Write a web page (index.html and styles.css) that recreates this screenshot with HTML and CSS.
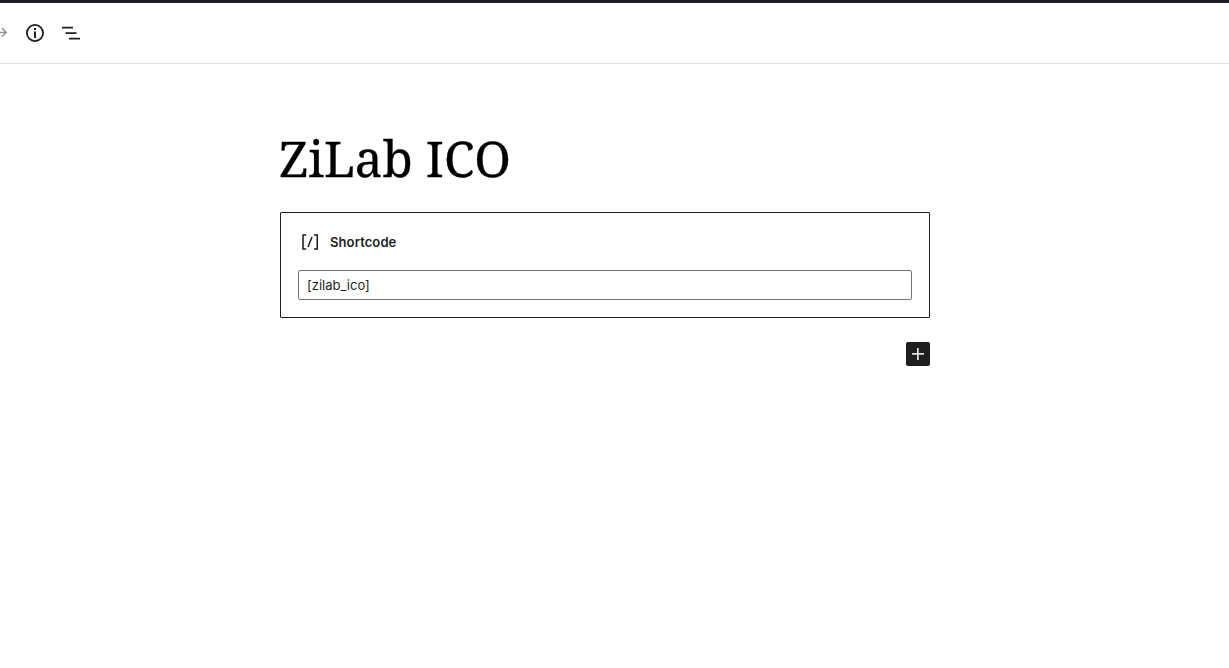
FILE: index.html
```
<!DOCTYPE html>
<html lang="en">
<head>
  <meta charset="UTF-8">
  <title>ZiLab ICO</title>
  <link rel="stylesheet" href="styles.css">
</head>
<body>
  <div class="toolbar">
    <button class="tool tool-redo" aria-label="Redo">
      <svg width="24" height="24" viewBox="0 0 24 24"><path d="M15.6 6.5l-1.1 1 2.9 3.3H8c-.9 0-1.7.3-2.3.9-1.4 1.5-1.4 4.2-1.4 5.6v.2h1.5v-.3c0-1.1 0-3.5 1-4.5.3-.3.7-.5 1.3-.5h9.2L14.5 15l1.1 1.1 4.6-4.6-4.6-5z"/></svg>
    </button>
    <button class="tool" aria-label="Details">
      <svg width="24" height="24" viewBox="0 0 24 24"><path fill-rule="evenodd" d="M12 3a9 9 0 1 0 0 18 9 9 0 0 0 0-18zm0 16.200a7.200 7.200 0 1 1 0-14.400 7.200 7.200 0 0 1 0 14.400z"/><path d="M11 7h2v2h-2zM11 10.500h2V17h-2z"/></svg>
    </button>
    <button class="tool" aria-label="List view">
      <svg width="24" height="24" viewBox="0 0 24 24"><path d="M3 5.800h11v1.700H3zM6.500 11.300h11V13h-11zM21 16.800H10v1.700h11z"/></svg>
    </button>
  </div>

  <div class="editor">
    <h1 class="post-title">ZiLab ICO</h1>

    <div class="shortcode-block">
      <div class="shortcode-label">
        <svg width="24" height="24" viewBox="0 0 24 24"><path d="M16 4.200v1.500h2.500v12.500H16v1.500h4V4.200h-4zM4.200 19.800h4v-1.500H5.800V5.800h2.500V4.200h-4l-.1 15.600zm5.100-3.100l1.400.6 4-10-1.400-.6-4 10z"/></svg>
        <span>Shortcode</span>
      </div>
      <input class="shortcode-input" type="text" value="[zilab_ico]">
    </div>

    <div class="inserter">
      <button class="add-block" aria-label="Add block">
        <svg width="24" height="24" viewBox="0 0 24 24"><path d="M11 12.750V18h1.750v-5.250H18V11h-5.250V6H11v5H6v1.750z"/></svg>
      </button>
    </div>
  </div>
</body>
</html>
```

FILE: styles.css
```
html, body { margin: 0; padding: 0; background: #fff; }
body { font-family: Inter, "Liberation Sans", sans-serif; color: #1e1e1e; height: 668px; overflow: hidden; }
button { padding: 0; border: none; background: none; cursor: pointer; }
svg { display: block; fill: currentColor; }

.toolbar { display: flex; align-items: center; gap: 12px; height: 60px; margin-left: -13px; border-top: 3px solid #1c1c26; border-bottom: 1px solid #e0e0e0; }
.tool { width: 24px; height: 24px; color: #1e1e1e; }
.tool-redo { color: #949494; }

.editor { width: 650px; margin-left: 280px; }
.post-title { margin: 0 0 0 -1px; padding-top: 64px; font-family: "Noto Serif", "DejaVu Serif", "Liberation Serif", serif; font-size: 49.4px; font-weight: 400; line-height: 60px; color: #000; white-space: nowrap; -webkit-text-stroke: 0.3px #000; }
.shortcode-block { margin-top: 24px; padding: 17px; border: 1px solid #1e1e1e; border-radius: 1px; }
.shortcode-label { display: flex; align-items: center; gap: 8px; height: 24px; margin-bottom: 16px; font-size: 13px; font-weight: 600; letter-spacing: 0.1px; }
.shortcode-input { display: block; box-sizing: border-box; width: 100%; height: 30px; padding: 0 8px; border: 1px solid #757575; border-radius: 2px; font-family: inherit; font-size: 13px; color: #1e1e1e; background: #fff; }
.inserter { display: flex; justify-content: flex-end; margin-top: 24px; }
.add-block { width: 24px; height: 24px; border-radius: 2px; background: #1e1e1e; color: #e0e0e0; }
```
